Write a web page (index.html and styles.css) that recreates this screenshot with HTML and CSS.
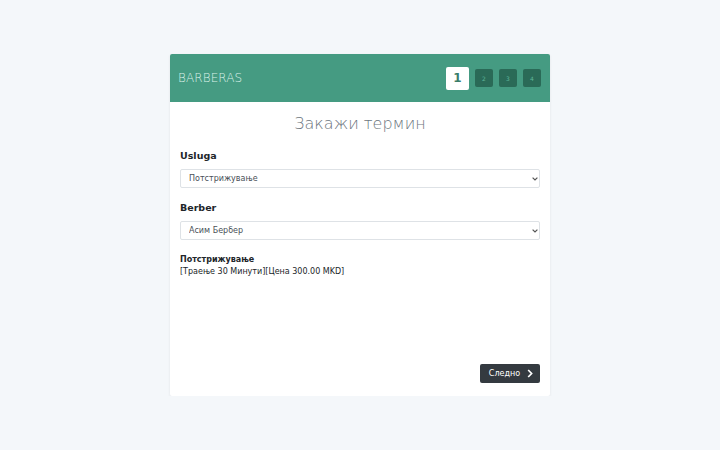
FILE: index.html
```html
<!DOCTYPE html>
<html lang="mk">
<head>
<meta charset="utf-8">
<title>Barberas</title>
<link rel="stylesheet" href="styles.css">
</head>
<body>
<div class="page">
  <div class="card">
    <div class="card-head">
      <div class="brand">BARBERAS</div>
      <div class="steps">
        <span class="step active">1</span>
        <span class="step">2</span>
        <span class="step">3</span>
        <span class="step">4</span>
      </div>
    </div>
    <div class="card-body">
      <h1 class="title">Закажи термин</h1>
      <div class="field">
        <label class="label">Usluga</label>
        <div class="select-wrap">
          <select class="select"><option>Потстрижување</option></select>
          <svg class="chev" width="6" height="4" viewBox="0 0 6 4"><path d="M0.6 0.6 L3 3 L5.4 0.6" fill="none" stroke="#555" stroke-width="1.2"/></svg>
        </div>
      </div>
      <div class="field">
        <label class="label">Berber</label>
        <div class="select-wrap">
          <select class="select"><option>Асим Бербер</option></select>
          <svg class="chev" width="6" height="4" viewBox="0 0 6 4"><path d="M0.6 0.6 L3 3 L5.4 0.6" fill="none" stroke="#555" stroke-width="1.2"/></svg>
        </div>
      </div>
      <div class="info">
        <div class="info-name">Потстрижување</div>
        <div class="info-meta">[Траење 30 Минути][Цена 300.00 MKD]</div>
      </div>
      <div class="actions">
        <button class="btn">Следно
          <svg width="6" height="9" viewBox="0 0 6 9"><path d="M1.2 1 L4.6 4.5 L1.2 8" fill="none" stroke="#fff" stroke-width="1.7"/></svg>
        </button>
      </div>
    </div>
  </div>
</div>
</body>
</html>
```
FILE: styles.css
```css
* { box-sizing: border-box; }
html, body { margin: 0; padding: 0; }
body {
  background: #f4f7fa;
  font-family: "DejaVu Sans", sans-serif;
  color: #212529;
}
.page {
  display: flex;
  justify-content: center;
  padding-top: 54px;
}
.card {
  width: 380px;
  height: 342px;
  background: #fff;
  border-radius: 2px;
  box-shadow: 0 1px 3px rgba(0,0,0,0.08);
  display: flex;
  flex-direction: column;
}
.card-head {
  height: 48px;
  background: #459b82;
  border-radius: 2px 2px 0 0;
  display: flex;
  align-items: center;
  justify-content: space-between;
  padding: 0 9px 0 8px;
}
.brand {
  color: #d8f0e8;
  font-family: "DejaVu Sans", sans-serif;
  font-weight: 300;
  font-size: 12px;
  letter-spacing: 0.1px;
}
.steps { display: flex; align-items: center; gap: 6px; }
.step {
  width: 18px;
  height: 18px;
  background: #2a6a57;
  color: #5fb497;
  border-radius: 2px;
  font-size: 6px;
  display: flex;
  align-items: center;
  justify-content: center;
}
.step.active {
  width: 23px;
  height: 23px;
  background: #fff;
  color: #3a7d69;
  font-size: 12px;
  font-weight: bold;
}
.card-body {
  flex: 1;
  padding: 11px 10px 13px 10px;
  display: flex;
  flex-direction: column;
}
.title {
  margin: 0 0 14px 0;
  text-align: center;
  font-family: "DejaVu Sans", sans-serif;
  font-size: 16px;
  font-weight: 300;
  color: #6c757d;
  line-height: 22px;
}
.field { display: flex; flex-direction: column; margin-bottom: 13px; }
.label {
  font-size: 9.5px;
  font-weight: bold;
  color: #212529;
  line-height: 14px;
  margin-bottom: 6px;
}
.select-wrap { position: relative; }
.select {
  appearance: none;
  -webkit-appearance: none;
  display: block;
  width: 100%;
  height: 19px;
  border: 1px solid #dee2e6;
  border-radius: 2px;
  background: #fff;
  font-family: "DejaVu Sans", sans-serif;
  font-size: 8px;
  color: #495057;
  padding: 0 8px;
  outline: none;
}
.chev { position: absolute; right: 2px; top: 8px; }
.info { margin-top: 1px; }
.info-name { font-size: 8px; font-weight: bold; line-height: 12px; }
.info-meta { font-size: 8px; line-height: 12px; color: #212529; }
.actions { margin-top: auto; display: flex; justify-content: flex-end; }
.btn {
  height: 19px;
  width: 60px;
  background: #343a40;
  border: none;
  border-radius: 2px;
  color: #fff;
  font-family: "DejaVu Sans", sans-serif;
  font-size: 8px;
  display: flex;
  align-items: center;
  justify-content: center;
  gap: 7px;
  padding: 0 0 0 2px;
}
```
